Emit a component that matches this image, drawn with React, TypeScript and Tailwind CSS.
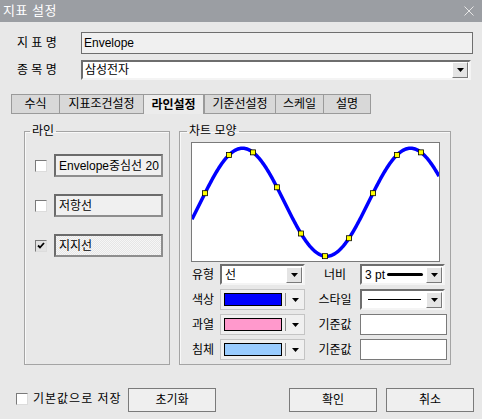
import React from "react";

const font = "font-['Liberation_Sans','Noto_Sans_CJK_KR',sans-serif]";

const DropBtn = () => (
  <div className="w-[16px] h-[16px] shrink-0 bg-[#e4e4e4] border border-t-white border-l-white border-b-[#7a7a7a] border-r-[#7a7a7a] flex items-center justify-center">
    <svg width="7" height="4" viewBox="0 0 7 4">
      <path d="M0 0h7L3.5 4z" fill="#000" />
    </svg>
  </div>
);

const Arrow = () => (
  <svg width="7" height="4" viewBox="0 0 7 4">
    <path d="M0 0h7L3.5 4z" fill="#000" />
  </svg>
);

const CheckBox = ({ checked = false }: { checked?: boolean }) => (
  <div
    className={`w-[12px] h-[12px] shrink-0 border border-t-[#7a7a7a] border-l-[#7a7a7a] border-b-[#dcdcdc] border-r-[#dcdcdc] flex items-center justify-center ${
      checked ? "bg-[#e2e2e2]" : "bg-white"
    }`}
  >
    {checked && (
      <svg width="8" height="7" viewBox="0 0 8 7">
        <path d="M1 3.5l2 2L7 1" stroke="#000" strokeWidth="1.8" fill="none" />
      </svg>
    )}
  </div>
);

const ColorCombo = ({ color }: { color: string }) => (
  <div className="w-[85px] h-[21px] bg-[#f0f0f0] border border-[#c4c4c4] flex items-center pl-[3px]">
    <div className="w-[58px] h-[13px] border border-black" style={{ background: color }} />
    <div className="w-px h-[13px] bg-[#8a8a8a] ml-[3px]" />
    <div className="ml-[6px] flex items-center">
      <Arrow />
    </div>
  </div>
);

// sine chart inside "차트 모양"
const W = 247;
const H = 118;
const yAt = (x: number) => 202.25 - 54 * Math.sin((2 * Math.PI * (x - 200.5)) / 168) - 143;
const curve = Array.from({ length: W + 1 }, (_, i) => {
  const ax = 192 + i;
  return `${i === 0 ? "M" : "L"}${i} ${yAt(ax).toFixed(2)}`;
}).join(" ");
const markers = Array.from({ length: 10 }, (_, i) => 205 + 24 * i);

const Chart = () => (
  <div className="w-[249px] h-[120px] bg-white border border-[#7a7a7a]">
    <svg width={W} height={H} viewBox={`0 0 ${W} ${H}`} className="block">
      <path d={curve} stroke="#0000ff" strokeWidth="3.5" fill="none" />
      {markers.map((mx) => (
        <rect
          key={mx}
          x={mx - 192 - 2.5}
          y={yAt(mx) - 2.5}
          width="5"
          height="5"
          fill="#ffff00"
          stroke="#000"
          strokeWidth="0.8"
        />
      ))}
    </svg>
  </div>
);

const LineBox = ({ text, hatched = false }: { text: string; hatched?: boolean }) => (
  <div
    className={`w-[109px] h-[23px] overflow-hidden whitespace-nowrap border-2 border-t-[#6b6b6b] border-l-[#6b6b6b] border-b-[#8e8e8e] border-r-[#8e8e8e] flex items-center pl-[3px] ${
      hatched
        ? "bg-[repeating-conic-gradient(#e6e6e6_0_25%,#f6f6f6_0_50%)] bg-[length:2px_2px]"
        : "bg-[#f0f0f0]"
    }`}
  >
    {text}
  </div>
);

const tabs = [
  { label: "수식", w: "w-[48px]" },
  { label: "지표조건설정", w: "w-[84px]" },
  { label: "라인설정", w: "w-[61px]", active: true },
  { label: "기준선설정", w: "w-[71px]" },
  { label: "스케일", w: "w-[48px]" },
  { label: "설명", w: "w-[48px]", last: true },
];

export default function App() {
  return (
    <div className={`w-[482px] h-[419px] bg-[#e8e8e8] flex flex-col overflow-hidden text-[12px] leading-[14px] text-black ${font}`}>
      {/* title bar */}
      <div className="h-[22px] shrink-0 bg-[#9b9ea3] flex items-center justify-between pl-[3px] pr-[8px] text-white text-[13px]">
        <span className="tracking-[0.5px]">지표 설정</span>
        <svg width="10" height="10" viewBox="0 0 10 10">
          <path d="M0.5 0.5l9 9M9.5 0.5l-9 9" stroke="#e6e6e6" strokeWidth="1" />
        </svg>
      </div>

      {/* 지표명 */}
      <div className="flex items-center mt-[10px] h-[22px] pl-[17px]">
        <span className="w-[64px]">지 표 명</span>
        <div className="w-[392px] h-[22px] bg-[#f0f0f0] border border-[#6e6e6e] flex items-center pl-[2px]">Envelope</div>
      </div>

      {/* 종목명 */}
      <div className="flex items-center mt-[6px] h-[20px] pl-[17px]">
        <span className="w-[64px]">종 목 명</span>
        <div className="w-[390px] h-[20px] bg-white border-2 border-t-[#6e6e6e] border-l-[#6e6e6e] border-b-[#f4f4f4] border-r-[#f4f4f4] flex items-center justify-between pl-[2px] pr-px">
          <span>삼성전자</span>
          <DropBtn />
        </div>
      </div>

      {/* tabs */}
      <div className="flex mt-[14px] h-[20px] pl-[11px]">
        {tabs.map((t) => (
          <div
            key={t.label}
            className={`${t.w} h-[20px] flex items-center justify-center border-t border-l border-[#9a9a9a] ${
              t.active ? "bg-[#ececec] font-bold border-r border-b-0" : "bg-[#d8d8d8] border-b"
            } ${t.last ? "border-r" : ""}`}
          >
            {t.label}
          </div>
        ))}
      </div>

      {/* group boxes */}
      <div className="flex mt-[9px] pl-[24px] gap-[9px]">
        <fieldset className="w-[146px] h-[242px] border border-[#a4a4a4] shadow-[inset_1px_1px_0_#f8f8f8]">
          <legend className="ml-[5px] px-[2px] leading-[16px]">라인</legend>
          <div className="flex flex-col pl-[10px] pt-[15px] gap-[17px]">
            <div className="flex items-center gap-[7px]">
              <CheckBox />
              <LineBox text="Envelope중심선  20" />
            </div>
            <div className="flex items-center gap-[7px]">
              <CheckBox />
              <LineBox text="저항선" />
            </div>
            <div className="flex items-center gap-[7px]">
              <CheckBox checked />
              <LineBox text="지지선" hatched />
            </div>
          </div>
        </fieldset>

        <fieldset className="w-[272px] h-[242px] border border-[#a4a4a4] shadow-[inset_1px_1px_0_#f8f8f8]">
          <legend className="ml-[7px] px-[2px] leading-[16px]">차트 모양</legend>
          <div className="flex flex-col pl-[11px] pt-[3px]">
            <Chart />
            <div className="flex flex-col gap-[4px] mt-[2px]">
              <div className="flex items-center h-[21px]">
                <span className="w-[29px] pl-px">유형</span>
                <div className="w-[85px] h-[21px] bg-white border-2 border-t-[#6e6e6e] border-l-[#6e6e6e] border-b-[#f4f4f4] border-r-[#f4f4f4] flex items-center justify-between pl-[3px] pr-px">
                  <span>선</span>
                  <DropBtn />
                </div>
                <span className="w-[44px] ml-[8px] text-center">너비</span>
                <div className="ml-[3px] w-[85px] h-[21px] bg-white border-2 border-t-[#6e6e6e] border-l-[#6e6e6e] border-b-[#f4f4f4] border-r-[#f4f4f4] flex items-center pl-[3px] pr-px">
                  <span>3 pt</span>
                  <div className="ml-[2px] w-[36px] h-[3px] bg-black rounded-full" />
                  <div className="ml-auto">
                    <DropBtn />
                  </div>
                </div>
              </div>
              <div className="flex items-center h-[21px]">
                <span className="w-[29px] pl-px">색상</span>
                <ColorCombo color="#0000ff" />
                <span className="w-[44px] ml-[8px] text-center">스타일</span>
                <div className="ml-[3px] w-[85px] h-[21px] bg-white border-2 border-t-[#6e6e6e] border-l-[#6e6e6e] border-b-[#f4f4f4] border-r-[#f4f4f4] flex items-center pl-[6px] pr-px">
                  <div className="w-[53px] h-px bg-black" />
                  <div className="ml-auto">
                    <DropBtn />
                  </div>
                </div>
              </div>
              <div className="flex items-center h-[21px]">
                <span className="w-[29px] pl-px">과열</span>
                <ColorCombo color="#ff99cc" />
                <span className="w-[44px] ml-[8px] text-center">기준값</span>
                <div className="ml-[3px] w-[87px] h-[21px] bg-white border border-[#7a7a7a]" />
              </div>
              <div className="flex items-center h-[21px]">
                <span className="w-[29px] pl-px">침체</span>
                <ColorCombo color="#99ccff" />
                <span className="w-[44px] ml-[8px] text-center">기준값</span>
                <div className="ml-[3px] w-[87px] h-[21px] bg-white border border-[#7a7a7a]" />
              </div>
            </div>
          </div>
        </fieldset>
      </div>

      {/* bottom buttons */}
      <div className="flex items-center mt-[23px] h-[24px] pl-[16px] pr-[8px]">
        <div className="w-[112px] flex items-center gap-[5px] -mt-[2px]">
          <CheckBox />
          <span className="tracking-[1px] whitespace-nowrap">기본값으로 저장</span>
        </div>
        <button className="w-[88px] h-[24px] bg-[#efefef] border border-[#7a7a7a]">초기화</button>
        <div className="flex-1" />
        <button className="w-[88px] h-[24px] bg-[#efefef] border border-[#7a7a7a]">확인</button>
        <button className="ml-[9px] w-[88px] h-[24px] bg-[#efefef] border border-[#7a7a7a]">취소</button>
      </div>
    </div>
  );
}
